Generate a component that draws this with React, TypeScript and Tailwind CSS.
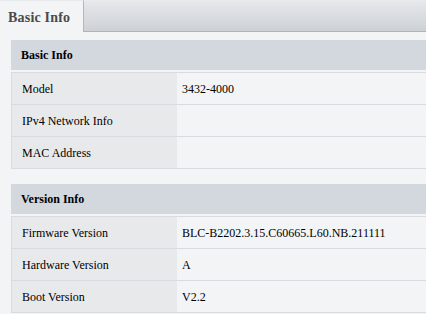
import React from "react";

const Row = ({ label, value }: { label: string; value: string }) => (
  <div className="flex h-[32px] border-b border-[#d9dbde]">
    <div className="w-[165px] bg-[#e8e9eb] pl-[10px] flex items-center">{label}</div>
    <div className="flex-1 bg-[#f3f4f6] pl-[5px] flex items-center">{value}</div>
  </div>
);

const Section = ({ title, rows, className }: { title: string; rows: [string, string][]; className?: string }) => (
  <div className={className}>
    <div className="h-[30px] bg-[#d3d8df] pl-[10px] flex items-center font-bold text-black">{title}</div>
    <div className="mt-[2px] border-t border-l border-[#d9dbde]">
      {rows.map(([l, v]) => (
        <Row key={l} label={l} value={v} />
      ))}
    </div>
  </div>
);

export default function App() {
  return (
    <div className="w-[426px] h-[314px] overflow-hidden bg-[#f3f4f6] text-[12px] text-black font-[Liberation_Serif,serif]">
      <div className="flex h-[32px]">
        <div className="w-[84px] h-full bg-[#f3f4f6] border-r border-t border-[#b4b8bc] border-t-[#e8eaec] pl-[8px] pt-[1px] flex items-center font-bold text-[14px] tracking-[0.2px] text-[#4a4a4a]">
          Basic Info
        </div>
        <div className="flex-1 h-full border-b border-t border-[#b0b4b9] border-t-[#e8eaec] bg-gradient-to-b from-[#e6e8ea] to-[#cdd1d6]" />
      </div>
      <div className="w-[440px] pl-[11px] pt-[8px]">
        <Section
          title="Basic Info"
          rows={[
            ["Model", "3432-4000"],
            ["IPv4 Network Info", ""],
            ["MAC Address", ""],
          ]}
        />
        <Section
          className="mt-[15px]"
          title="Version Info"
          rows={[
            ["Firmware Version", "BLC-B2202.3.15.C60665.L60.NB.211111"],
            ["Hardware Version", "A"],
            ["Boot Version", "V2.2"],
          ]}
        />
      </div>
    </div>
  );
}
